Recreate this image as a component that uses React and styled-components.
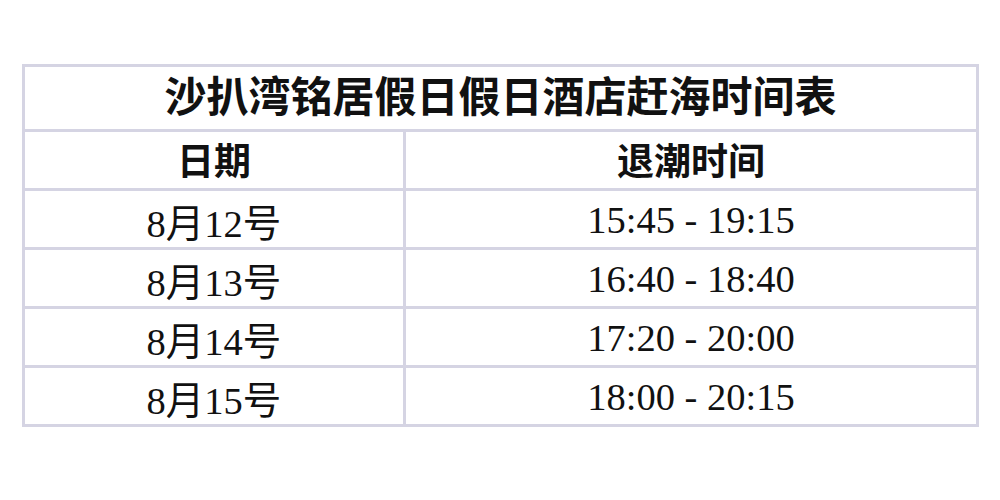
import React from 'react'
import styled, { createGlobalStyle } from 'styled-components'

const GlobalStyle = createGlobalStyle`
  html, body {
    margin: 0;
    padding: 0;
    background: #ffffff;
  }
`

const Page = styled.div`
  width: 1000px;
  height: 500px;
  padding: 64px 0 0 22px;
  box-sizing: border-box;
  background: #ffffff;
`

const Table = styled.div`
  width: 957px;
  display: grid;
  grid-template-columns: 378px 570px;
  grid-template-rows: 62px 56px repeat(4, 56px);
  gap: 3px;
  padding: 3px;
  box-sizing: border-box;
  background: #d5d4e3;
`

const Cell = styled.div`
  background: #ffffff;
  display: flex;
  align-items: center;
  justify-content: center;
  color: #111111;
  white-space: nowrap;
`

const TitleCell = styled(Cell)`
  grid-column: 1 / -1;
  font-family: "Noto Sans CJK SC", "Noto Sans", sans-serif;
  font-weight: 700;
  font-size: 42px;
  padding-bottom: 10px;
`

const HeadCell = styled(Cell)`
  font-family: "Noto Sans CJK SC", "Noto Sans", sans-serif;
  font-weight: 700;
  font-size: 37px;
  padding-bottom: 3px;
`

const DataCell = styled(Cell)`
  font-family: "Liberation Serif", "Noto Sans CJK SC", serif;
  font-size: 38.5px;
  padding-top: 1px;
`

const rows = [
  { date: '8月12号', time: '15:45 - 19:15' },
  { date: '8月13号', time: '16:40 - 18:40' },
  { date: '8月14号', time: '17:20 - 20:00' },
  { date: '8月15号', time: '18:00 - 20:15' },
]

export default function App() {
  return (
    <Page>
      <GlobalStyle />
      <Table>
        <TitleCell>沙扒湾铭居假日假日酒店赶海时间表</TitleCell>
        <HeadCell>日期</HeadCell>
        <HeadCell>退潮时间</HeadCell>
        {rows.map(r => (
          <React.Fragment key={r.date}>
            <DataCell>{r.date}</DataCell>
            <DataCell>{r.time}</DataCell>
          </React.Fragment>
        ))}
      </Table>
    </Page>
  )
}
